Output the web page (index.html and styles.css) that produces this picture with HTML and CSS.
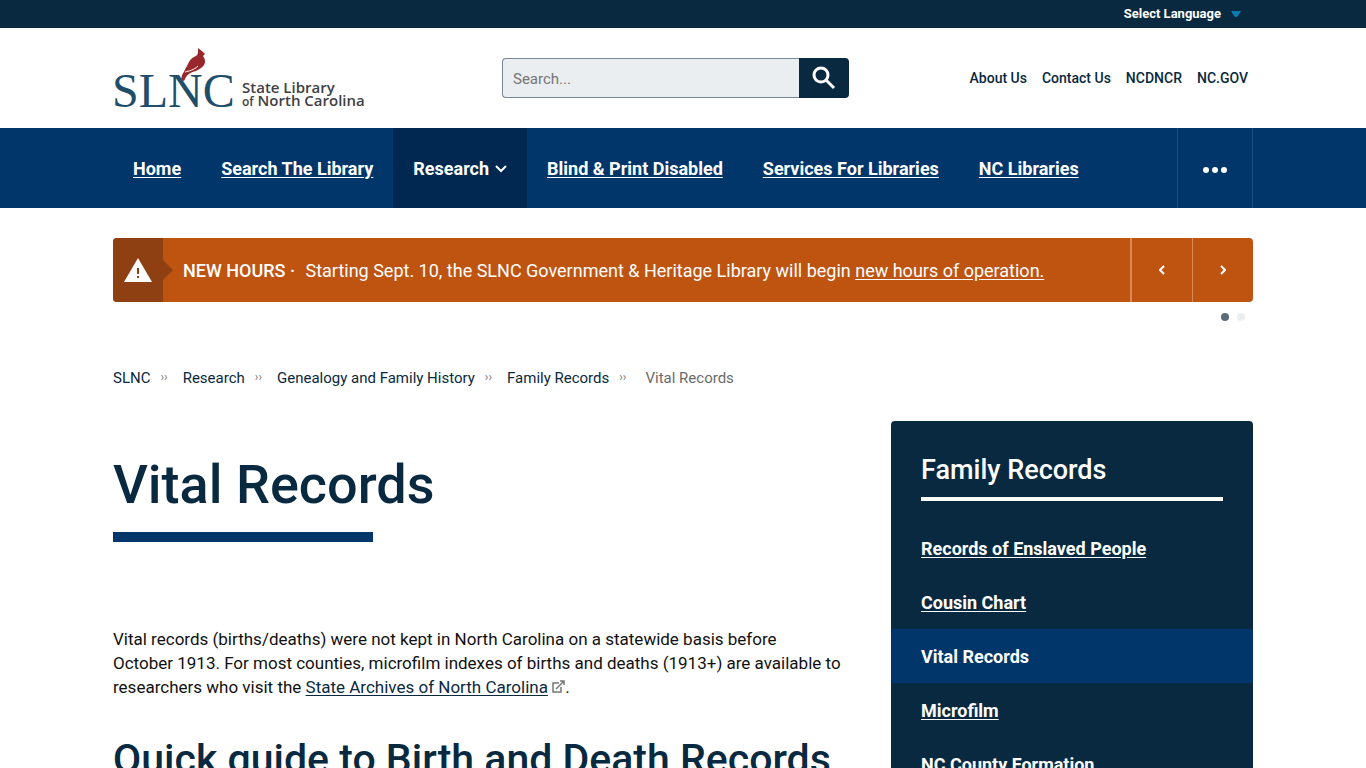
FILE: index.html
```html
<!DOCTYPE html>
<html lang="en">
<head>
  <meta charset="UTF-8">
  <meta name="viewport" content="width=device-width, initial-scale=1">
  <title>Vital Records | State Library of North Carolina</title>
  <link rel="stylesheet" href="styles.css">
</head>
<body>

  <div class="topbar">
    <div class="container">
      <button class="language" type="button">Select Language
        <svg width="10" height="6" viewBox="0 0 10 6" aria-hidden="true"><path d="M0 0h10L7 5q-2 2-4 0z" fill="#0a7bb0"/></svg>
      </button>
    </div>
  </div>

  <header class="container header">
    <a class="logo" href="#" aria-label="State Library of North Carolina">
      <svg width="252" height="64" viewBox="0 0 252 64">
        <text class="logo-slnc" x="-1" y="61">SLNC</text>
        <path d="M85 2l5 4 2 2-2 2c2 3 3 6 1 9-2 3-5 4-8 6-5 1-8 3-10 6l-2 4-3-1 1-5c2-3 3-6 5-9 2-4 3-7 7-9 3-1 4-3 4-5z" fill="#98282c"/>
        <path d="M72 26c4-1 9-2 13-6" fill="none" stroke="#fff" stroke-width="1"/>
        <text class="logo-name" x="129" y="47">State Library</text>
        <text class="logo-name" x="129" y="60"><tspan class="logo-of">of</tspan> North Carolina</text>
      </svg>
    </a>
    <form class="search" role="search">
      <input type="search" aria-label="Search" placeholder="Search...">
      <button type="submit" aria-label="Search">
        <svg width="24" height="24" viewBox="0 0 24 24" fill="none" stroke="#fff" stroke-width="3"><circle cx="9" cy="9" r="7"/><path d="M14 14l8 8"/></svg>
      </button>
    </form>
    <nav class="quick-links" aria-label="Quick links">
      <a href="#">About Us</a>
      <a href="#">Contact Us</a>
      <a href="#">NCDNCR</a>
      <a href="#">NC.GOV</a>
    </nav>
  </header>

  <nav class="mainnav" aria-label="Main">
    <div class="container mainnav-inner">
      <a href="#">Home</a>
      <a href="#">Search The Library</a>
      <a class="active" href="#">Research
        <svg width="12" height="8" viewBox="0 0 12 8" fill="none" stroke="#fff" stroke-width="2"><path d="M1 1l5 5 5-5"/></svg>
      </a>
      <a href="#">Blind &amp; Print Disabled</a>
      <a href="#">Services For Libraries</a>
      <a href="#">NC Libraries</a>
      <button class="more" type="button" aria-label="More">
        <svg width="24" height="6" viewBox="0 0 24 6" fill="#fff"><circle cx="3" cy="3" r="3"/><circle cx="12" cy="3" r="3"/><circle cx="21" cy="3" r="3"/></svg>
      </button>
    </div>
  </nav>

  <main class="container">
    <section class="alert" aria-label="Alerts">
      <div class="alert-icon">
        <svg width="28" height="24" viewBox="0 0 28 24"><path d="M14 0l14 24H0z" fill="#fff"/><path d="M13 10h2v6h-2zM13 18h2v2h-2z" fill="#8f4012"/></svg>
      </div>
      <p><strong>NEW HOURS ·</strong> Starting Sept. 10, the SLNC Government &amp; Heritage Library will begin <a href="#">new hours of operation.</a></p>
      <button type="button" aria-label="Previous alert">
        <svg width="6" height="10" viewBox="0 0 6 10" fill="none" stroke="#fff" stroke-width="2"><path d="M5 1L1 5l4 4"/></svg>
      </button>
      <button type="button" aria-label="Next alert">
        <svg width="6" height="10" viewBox="0 0 6 10" fill="none" stroke="#fff" stroke-width="2"><path d="M1 1l4 4-4 4"/></svg>
      </button>
    </section>
    <div class="dots">
      <button class="current" type="button" aria-label="Alert 1"></button>
      <button type="button" aria-label="Alert 2"></button>
    </div>

    <nav class="breadcrumb" aria-label="Breadcrumb">
      <a href="#">SLNC</a>
      <a href="#">Research</a>
      <a href="#">Genealogy and Family History</a>
      <a href="#">Family Records</a>
      <span>Vital Records</span>
    </nav>

    <div class="columns">
      <article>
        <h1>Vital Records</h1>
        <p>Vital records (births/deaths) were not kept in North Carolina on a statewide basis before<br>
          October 1913. For most counties, microfilm indexes of births and deaths (1913+) are available to researchers who visit the <a href="#">State Archives of North Carolina</a>
          <svg class="external" width="13" height="13" viewBox="0 0 13 13" fill="none" stroke="#777"><path d="M7 3H1v9h8V7M4 9l8-8M8 1h4v4" stroke-width="1.5"/></svg>.</p>
        <h2>Quick guide to Birth and Death Records</h2>
      </article>

      <aside class="sidebar">
        <h2>Family Records</h2>
        <nav aria-label="Family Records">
          <a href="#">Records of Enslaved People</a>
          <a href="#">Cousin Chart</a>
          <a class="active" href="#">Vital Records</a>
          <a href="#">Microfilm</a>
          <a href="#">NC County Formation</a>
        </nav>
      </aside>
    </div>
  </main>

</body>
</html>
```

FILE: styles.css
```css
* { box-sizing: border-box; }
body { margin: 0; background: #fff; color: #111; font-family: Roboto, "Liberation Sans", sans-serif; font-size: 17px; line-height: 24px; }
a { color: #092940; }
button { font-family: inherit; border: none; cursor: pointer; }
svg { flex-shrink: 0; }
.container { max-width: 1140px; margin: 0 auto; }

.topbar { background: #092940; }
.language { display: flex; align-items: center; gap: 10px; margin-left: auto; padding: 0 12px; background: none; color: #fff; font-size: 13px; font-weight: bold; line-height: 28px; }

.header { display: grid; grid-template-columns: 389px 347px 1fr; align-items: center; height: 100px; }
.logo { display: flex; }
.logo-slnc { font-family: "Liberation Serif", serif; font-size: 48px; fill: #1f4e6b; }
.logo-name { font-family: "Open Sans", sans-serif; font-size: 15px; font-weight: 600; fill: #414042; }
.logo-of { font-size: 12px; }
.search { display: flex; height: 40px; }
.search input { flex: 1; min-width: 0; padding: 2px 10px 0; border: 1px solid #7b8794; border-right: none; border-radius: 4px 0 0 4px; background: #ebeef1; font-family: inherit; font-size: 15px; }
.search input::placeholder { color: #757575; }
.search button { display: flex; align-items: center; justify-content: center; width: 50px; border-radius: 0 4px 4px 0; background: #092940; }
.quick-links { display: flex; justify-content: flex-end; gap: 15px; padding: 0 5px 0 0; font-size: 14px; font-weight: 500; }
.quick-links a { text-decoration: none; }

.mainnav { background: #01366b; }
.mainnav-inner { display: flex; height: 80px; }
.mainnav a { display: flex; align-items: center; gap: 6px; padding: 2px 20px 0; color: #fff; font-size: 18px; font-weight: bold; text-underline-offset: 2px; }
.mainnav .active { background: #002850; text-decoration: none; }
.more { width: 76px; margin-left: auto; border-left: 1px solid #1f4f80; border-right: 1px solid #1f4f80; background: none; }

.alert { display: flex; height: 64px; margin-top: 30px; border-radius: 4px; overflow: hidden; background: #bf5411; color: #fff; }
.alert-icon { position: relative; display: flex; align-items: center; justify-content: center; width: 50px; background: #8f4012; }
.alert-icon::after { content: ""; position: absolute; left: 50px; top: 22px; border: 10px solid transparent; border-left-color: #8f4012; border-right: none; }
.alert p { flex: 1; margin: 0; padding: 2px 20px 0; font-size: 18px; line-height: 62px; }
.alert strong { margin-right: 6px; font-weight: 500; }
.alert a { color: #fff; text-underline-offset: 2px; }
.alert button { width: 61px; border-left: 1px solid #d98a58; background: none; }
.alert p + button { width: 62px; border-left-width: 2px; }
.dots { display: flex; justify-content: flex-end; gap: 8px; padding: 11px 8px 0; }
.dots button { width: 8px; height: 8px; padding: 0; border-radius: 50%; background: #ebeef1; }
.dots .current { background: #5d6b7a; }

.breadcrumb { display: flex; margin-top: 45px; font-size: 15px; }
.breadcrumb a { text-decoration: none; }
.breadcrumb a::after { content: "››"; margin: 0 15px 0 10px; color: #777; font-size: 12px; line-height: 12px; vertical-align: 2px; }
.breadcrumb span { margin-left: 4px; color: #6b6b6b; }

.columns { display: grid; grid-template-columns: 1fr 362px; gap: 30px; margin-top: 31px; }
h1, h2 { color: #092940; font-weight: 500; }
h1 { margin: 32px 0 85px; font-size: 54px; line-height: 64px; }
h1::after { content: ""; display: block; width: 260px; height: 10px; margin-top: 15px; background: #01366b; }
article p { margin: 0 0 35px; }
article p a { text-underline-offset: 2px; }
article h2 { margin: 0; font-size: 41px; line-height: 50px; }
.sidebar { padding: 30px 0; border-radius: 4px; background: #092940; }
.sidebar h2 { margin: 0 30px 20px; padding-bottom: 8px; border-bottom: 4px solid #fff; color: #fff; font-size: 27px; line-height: 38px; }
.sidebar a { display: block; padding: 16px 30px 14px; color: #fff; font-size: 18px; font-weight: bold; text-underline-offset: 2px; }
.sidebar .active { background: #01366b; text-decoration: none; }
```
